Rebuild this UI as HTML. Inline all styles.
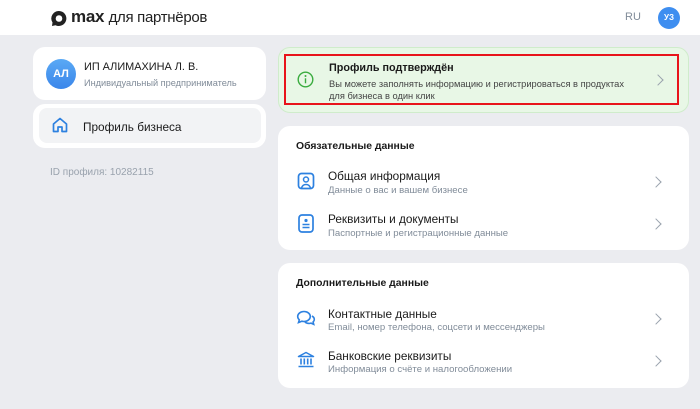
<!DOCTYPE html><html><head><meta charset="utf-8"><style>
*{box-sizing:border-box;margin:0;padding:0}
body{width:700px;height:409px;background:#ebecf0;font-family:"Liberation Sans",sans-serif;position:relative;overflow:hidden;color:#1a1a1a}
.a{position:absolute}
.hdr{left:0;top:0;width:700px;height:35px;background:#fff}
.card{background:#fff;border-radius:12px}
.t{font-size:11.2px}.s{font-size:9.6px;color:#818c99}
.chev{position:absolute;right:26px;width:8px;height:8px;border-right:1.6px solid #99a2ad;border-top:1.6px solid #99a2ad;transform:rotate(45deg)}
</style></head><body>
<div class="a hdr"></div>
<svg class="a" style="left:50px;top:10px" width="18" height="17" viewBox="0 0 18 17"><path d="M9 1a7.5 7.5 0 1 1-3.5 14.2L2 16l.5-3.5A7.5 7.5 0 0 1 9 1z" fill="#222"/><circle cx="9" cy="8.5" r="3.3" fill="#fff"/></svg>
<div class="a" style="left:71px;top:7px;font-size:17px;font-weight:bold;color:#222;letter-spacing:-0.3px">max <span style="font-weight:normal;font-size:15px">для партнёров</span></div>
<div class="a" style="left:625px;top:11px;font-size:11px;color:#818c99">RU</div>
<div class="a" style="left:658px;top:7px;width:22px;height:22px;border-radius:50%;background:#3e8ef0;color:#fff;font-size:8px;font-weight:bold;text-align:center;line-height:22px">УЗ</div>

<div class="a card" style="left:33px;top:47px;width:233px;height:53px"></div>
<div class="a" style="left:46px;top:59px;width:30px;height:30px;border-radius:50%;background:linear-gradient(#5aa9f5,#3a86ea);color:#fff;font-size:11px;font-weight:bold;text-align:center;line-height:30px">АЛ</div>
<div class="a t" style="left:84px;top:61px;font-size:10.9px">ИП АЛИМАХИНА Л. В.</div>
<div class="a s" style="left:84px;top:78px;font-size:9.2px">Индивидуальный предприниматель</div>
<div class="a card" style="left:33px;top:104px;width:233px;height:44px"></div>
<div class="a" style="left:39px;top:108px;width:222px;height:35px;background:#f2f3f5;border-radius:8px"></div>
<svg class="a" style="left:51px;top:116px" width="18" height="18" viewBox="0 0 18 18"><path d="M2.5 8L9 2.5 15.5 8v7.5h-4.5v-4.5h-4v4.5H2.5z" fill="none" stroke="#2d81e0" stroke-width="1.7" stroke-linejoin="round"/></svg>
<div class="a t" style="left:83px;top:120px;font-size:11.8px">Профиль бизнеса</div>
<div class="a" style="left:50px;top:167px;font-size:10px;color:#99a2ad">ID профиля: 10282115</div>

<div class="a" style="left:278px;top:47px;width:411px;height:66px;background:#e8f7e6;border:1px solid #cfeccb;border-radius:12px"></div>
<div class="a" style="left:284px;top:54px;width:395px;height:51px;border:2px solid #e8141b"></div>
<svg class="a" style="left:297px;top:71px" width="17" height="17" viewBox="0 0 17 17"><circle cx="8.5" cy="8.5" r="7.3" fill="none" stroke="#3aac3f" stroke-width="1.4"/><circle cx="8.5" cy="5" r="1" fill="#3aac3f"/><path d="M8.5 7.3v5" stroke="#3aac3f" stroke-width="1.4"/></svg>
<div class="a" style="left:329px;top:62px;font-size:10.8px;font-weight:bold">Профиль подтверждён</div>
<div class="a" style="left:329px;top:78px;font-size:9.3px;color:#444;line-height:12px">Вы можете заполнять информацию и регистрироваться в продуктах<br>для бизнеса в один клик</div>
<div class="chev" style="top:76px;right:38px"></div>

<div class="a card" style="left:278px;top:126px;width:411px;height:124px"></div>
<div class="a" style="left:296px;top:141px;font-size:10.4px;font-weight:bold">Обязательные данные</div>
<svg class="a" style="left:297px;top:172px" width="18" height="18" viewBox="0 0 18 18"><rect x="1.5" y="1.5" width="15" height="15" rx="3" fill="none" stroke="#2d81e0" stroke-width="1.7"/><circle cx="9" cy="7.5" r="2.5" fill="none" stroke="#2d81e0" stroke-width="1.5"/><path d="M4.5 16c.8-2.5 2.5-3.5 4.5-3.5s3.7 1 4.5 3.5" fill="none" stroke="#2d81e0" stroke-width="1.5"/></svg>
<div class="a t" style="left:328px;top:169px;font-size:11.8px">Общая информация</div>
<div class="a s" style="left:328px;top:185px">Данные о вас и вашем бизнесе</div>
<div class="chev" style="top:178px;right:40px"></div>
<svg class="a" style="left:298px;top:214px" width="16" height="19" viewBox="0 0 16 19"><rect x="1" y="1" width="14" height="17" rx="3" fill="none" stroke="#2d81e0" stroke-width="1.7"/><circle cx="8" cy="6.5" r="1.6" fill="#2d81e0"/><path d="M4.5 10.5h7M4.5 13.5h7" stroke="#2d81e0" stroke-width="1.5"/></svg>
<div class="a t" style="left:328px;top:212px;font-size:11.8px">Реквизиты и документы</div>
<div class="a s" style="left:328px;top:228px">Паспортные и регистрационные данные</div>
<div class="chev" style="top:220px;right:40px"></div>

<div class="a card" style="left:278px;top:263px;width:411px;height:125px"></div>
<div class="a" style="left:296px;top:278px;font-size:10.4px;font-weight:bold">Дополнительные данные</div>
<svg class="a" style="left:296px;top:310px" width="20" height="17" viewBox="0 0 20 17"><path d="M8 1.5c3.6 0 6.3 2.3 6.3 5s-2.7 5-6.3 5c-.8 0-1.5-.1-2.2-.3L2.5 12.5l.8-2.7C2.3 8.9 1.7 7.8 1.7 6.5c0-2.7 2.7-5 6.3-5z" fill="none" stroke="#2d81e0" stroke-width="1.6"/><path d="M16 6c1.4.8 2.3 2 2.3 3.4 0 1-.4 1.9-1.2 2.6l.6 2.3-2.7-1.2c-.6.2-1.3.3-2 .3-1.7 0-3.2-.6-4.1-1.6" fill="none" stroke="#2d81e0" stroke-width="1.6"/></svg>
<div class="a t" style="left:328px;top:307px;font-size:11.8px">Контактные данные</div>
<div class="a s" style="left:328px;top:322px">Email, номер телефона, соцсети и мессенджеры</div>
<div class="chev" style="top:315px;right:40px"></div>
<svg class="a" style="left:297px;top:351px" width="18" height="17" viewBox="0 0 18 17"><path d="M1.5 5.5L9 1.5l7.5 4z" fill="none" stroke="#2d81e0" stroke-width="1.5" stroke-linejoin="round"/><path d="M4 7.5v6M7.3 7.5v6M10.7 7.5v6M14 7.5v6M1.5 15.5h15" stroke="#2d81e0" stroke-width="1.6"/></svg>
<div class="a t" style="left:328px;top:349px;font-size:11.8px">Банковские реквизиты</div>
<div class="a s" style="left:328px;top:364px">Информация о счёте и налогообложении</div>
<div class="chev" style="top:357px;right:40px"></div>
</body></html>
